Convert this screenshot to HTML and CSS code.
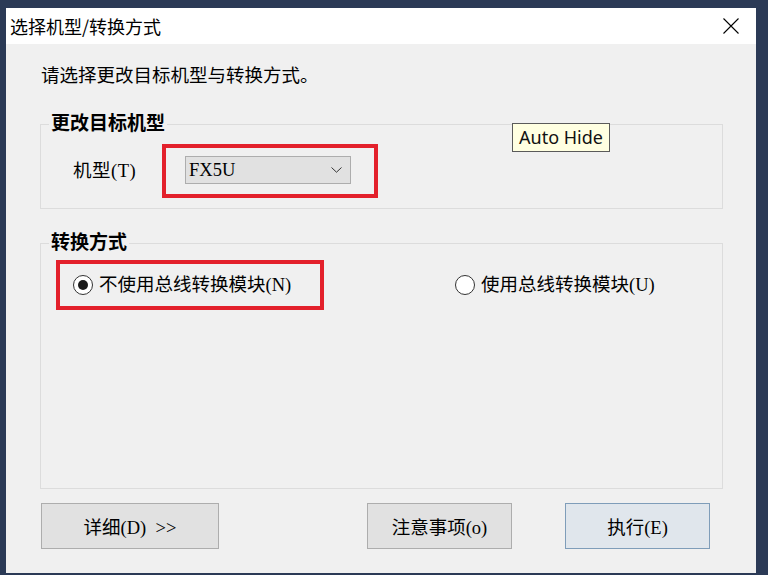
FILE: index.html
```html
<!DOCTYPE html>
<html lang="zh-CN">
  <head>
    <meta charset="UTF-8" />
    <title>选择机型/转换方式</title>
    <link rel="stylesheet" href="styles.css">
  </head>
  <body>
    <div class="dialog">
      <div class="titlebar">
        <span class="title">选择机型/转换方式</span>
        <svg class="close" width="16" height="16" viewBox="0 0 16 16">
          <path d="M0.5 0.5 L15.5 15.5 M15.5 0.5 L0.5 15.5" stroke="#000" stroke-width="1.1" fill="none" />
        </svg>
      </div>

      <div class="content">
        <p class="intro">请选择更改目标机型与转换方式。</p>

        <fieldset class="group group-model">
          <legend>更改目标机型</legend>
          <div class="row row-model">
            <label class="field-label" for="model">机型(T)</label>
            <div class="highlight highlight-model">
              <div class="combo" id="model">
                <span>FX5U</span>
                <svg width="11" height="6" viewBox="0 0 11 6">
                  <path d="M0.5 0.5 L5.5 5.2 L10.5 0.5" stroke="#333" stroke-width="1" fill="none" />
                </svg>
              </div>
            </div>
          </div>
        </fieldset>

        <fieldset class="group group-mode">
          <legend>转换方式</legend>
          <div class="row row-mode">
            <div class="highlight highlight-mode">
              <label class="radio checked"><span class="dot"></span>不使用总线转换模块(N)</label>
            </div>
            <label class="radio radio-second"><span class="dot"></span>使用总线转换模块(U)</label>
          </div>
        </fieldset>

        <div class="actions">
          <button class="btn btn-detail">详细(D)&nbsp;&nbsp;&gt;&gt;</button>
          <button class="btn btn-notes">注意事项(o)</button>
          <button class="btn btn-run">执行(E)</button>
        </div>
      </div>

      <div class="tooltip">Auto Hide</div>
    </div>
  </body>
</html>
```

FILE: styles.css
```css
body {
  margin: 0;
  background-color: #2b3a56;
  width: 768px;
  height: 575px;
  overflow: hidden;
  font-family: "Liberation Serif", "Noto Sans CJK SC", serif;
  font-size: 18.5px;
  color: #000;
}
.dialog {
  position: relative;
  margin: 8px 0 0 6px;
  width: 750px;
  height: 565px;
  background-color: #f0f0f0;
}
.titlebar {
  height: 36px;
  background-color: #fff;
  display: flex;
  align-items: center;
  justify-content: space-between;
  padding: 0 17px 0 4px;
}
.title {
  font-family: "Noto Sans CJK SC", sans-serif;
  font-size: 18px;
  line-height: 20px;
}
.close {
  display: block;
}
.content {
  padding: 0 33px 0 34px;
}
.intro {
  margin: 22px 0 0;
  padding-left: 1px;
  line-height: 20px;
}
.group {
  margin: 0;
  border: 1px solid #dcdcdc;
  padding: 0;
}
.group legend {
  margin-left: 8px;
  padding: 0 2px;
  font-weight: bold;
  font-size: 19px;
  line-height: 20px;
}
.group-model {
  margin-top: 28px;
  padding: 10px 0;
}
.group-mode {
  margin-top: 24px;
  padding: 7px 0 178px;
}
.row {
  display: flex;
  align-items: center;
}
.row-model {
  margin-left: 32px;
}
.row-mode {
  margin-left: 15px;
}
.field-label {
  width: 89px;
  line-height: 20px;
  letter-spacing: 0.5px;
}
.highlight {
  border: 4px solid #e3202b;
  box-sizing: border-box;
}
.highlight-model {
  width: 216px;
  height: 54px;
  padding: 8px 0 0 19px;
}
.combo {
  box-sizing: border-box;
  width: 166px;
  height: 28px;
  border: 1px solid #adadad;
  background-color: #e1e1e1;
  display: flex;
  align-items: center;
  justify-content: space-between;
  padding: 0 8px 0 3px;
  line-height: 20px;
}
.combo svg {
  display: block;
}
.highlight-mode {
  width: 268px;
  height: 50px;
  padding-left: 13px;
  display: flex;
  align-items: center;
}
.radio {
  display: flex;
  align-items: center;
  line-height: 20px;
}
.dot {
  box-sizing: border-box;
  width: 20px;
  height: 20px;
  border: 1px solid #333;
  border-radius: 50%;
  background-color: #fff;
  margin-right: 6px;
  display: flex;
  align-items: center;
  justify-content: center;
}
.checked .dot::after {
  content: "";
  width: 10px;
  height: 10px;
  border-radius: 50%;
  background-color: #1a1a1a;
}
.radio-second {
  margin-left: 131px;
}
.actions {
  display: flex;
  margin-top: 14px;
}
.btn {
  box-sizing: border-box;
  height: 46px;
  border: 1px solid #adadad;
  background-color: #e1e1e1;
  font-family: inherit;
  font-size: 18.5px;
  color: #000;
  padding: 0;
}
.btn-detail {
  width: 178px;
  margin-left: 1px;
}
.btn-notes {
  width: 145px;
  margin-left: 148px;
}
.btn-run {
  width: 145px;
  margin-left: 53px;
  border-color: #7f9db9;
  background-color: #e0e6ec;
}
.tooltip {
  position: absolute;
  left: 506px;
  top: 115px;
  box-sizing: border-box;
  width: 98px;
  height: 29px;
  border: 1px solid #5a5a5a;
  background-color: #ffffe1;
  font-family: "Noto Sans", sans-serif;
  font-size: 18px;
  line-height: 26px;
  text-align: center;
  color: #111;
}
```
